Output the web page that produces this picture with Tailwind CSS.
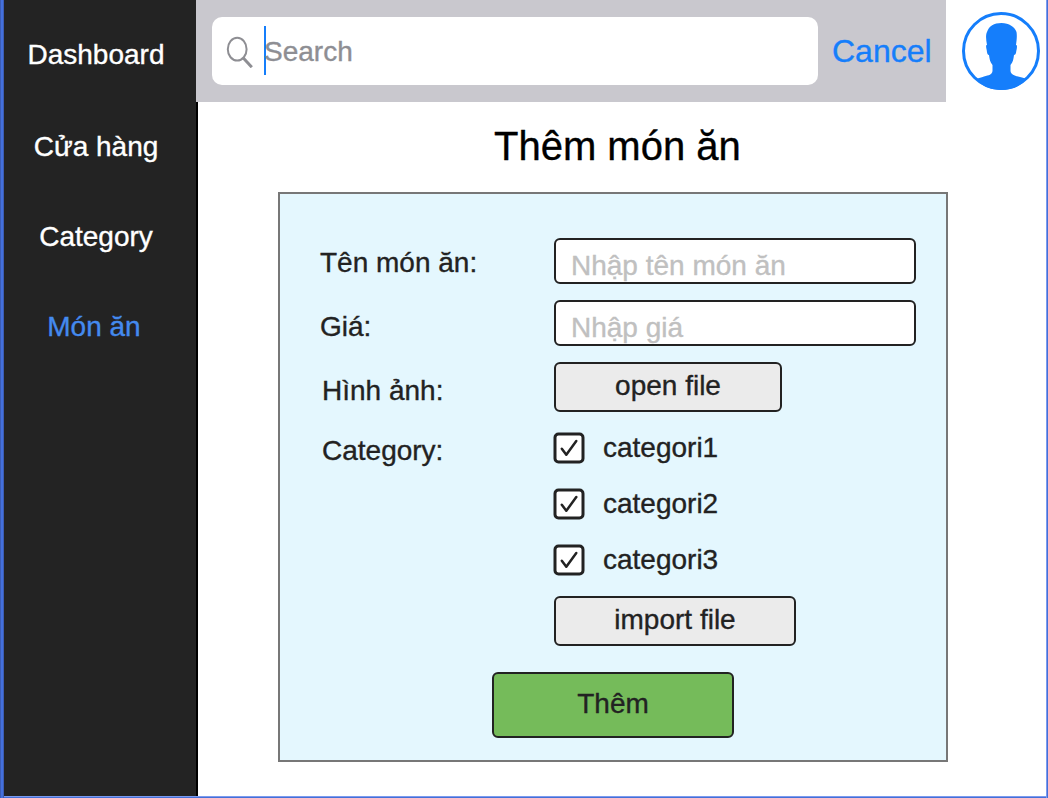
<!DOCTYPE html>
<html lang="vi">
<head>
<meta charset="utf-8">
<title>Thêm món ăn</title>
<script src="https://cdn.jsdelivr.net/npm/@tailwindcss/browser@4"></script>
</head>
<body class="bg-white overflow-hidden">
<div class="flex w-[1048px] h-[798px] font-['Liberation_Sans',Arial,sans-serif] text-[28px] leading-8 text-[#222222] [-webkit-text-stroke:0.35px]">
  <div class="w-1 shrink-0 bg-[#4470dc] border-x border-[#3c5cb4]"></div>
  <div class="flex flex-1 border-r border-[#4470d8]">
  <div class="flex flex-1 flex-col border-r border-[#7c9bee]">
    <div class="flex h-[796px]">
      <nav class="flex w-48 shrink-0 flex-col items-center bg-[#232323] pt-[39px] pr-2 text-white">
        <a>Dashboard</a>
        <a class="mt-[60px]">Cửa hàng</a>
        <a class="mt-[58px]">Category</a>
        <a class="mt-[58px] mr-1 text-[#448aef]">Món ăn</a>
      </nav>
      <div class="flex flex-1 flex-col">
        <header class="flex h-[102px] shrink-0">
          <div class="flex w-[750px] items-start bg-[#c9c8ce] pl-4 pt-[17px]">
            <div class="flex h-[68px] w-[606px] items-start rounded-[10px] bg-white">
              <svg class="ml-[14px] mt-[19px] h-8 w-7 shrink-0" viewBox="0 0 28 32" fill="none" stroke="#8e8e93"><ellipse cx="11.200" cy="13.200" rx="9.400" ry="11.400" stroke-width="2"/><path d="M17.300 22L25.800 31.200" stroke-width="3"/></svg>
              <div class="ml-[10px] mt-[9px] h-[49px] w-[2px] bg-[#157efb]"></div>
              <span class="-ml-[2px] mt-[19px] text-[#8e8e93]">Search</span>
            </div>
            <span class="ml-[14px] mt-4 text-[32px] leading-9 text-[#157efb]">Cancel</span>
          </div>
          <svg class="ml-4 mt-3 h-[78px] w-[78px]" viewBox="0 0 78 78"><circle cx="39" cy="39" r="37.5" fill="white" stroke="#157efb" stroke-width="3"/><path fill="#157efb" d="M39.500 11C47 11 53 15 54.500 20C55.200 24 54.600 29 54 33C55.500 33 55 36 54.300 39C54 42 53 43 52 43C51.500 47 51 50 48.500 53L48.500 59C49 63 54 64 58 65C61 66 62.500 66 64.500 67C58 75 49 78 39 78C29 78 20 74.500 14.500 67C17 66 19 65.500 22 64.500C27 63 30 63 30.500 59L30.500 53C28 50 27.500 47 27 43C25.500 43 25 41 24.700 38C24 35 23.700 33 25 33C24 28 23.500 23 25 20C27 14 32 11 39.500 11Z"/></svg>
        </header>
        <main class="flex flex-1 flex-col border-l-2 border-black">
          <h1 class="ml-[296px] mt-[22px] text-[40px] leading-[44px] text-black">Thêm món ăn</h1>
          <form class="ml-20 mt-6 flex h-[570px] w-[670px] flex-col border-2 border-[#777777] bg-[#e4f7fe]">
            <div class="flex pt-11">
              <div class="flex w-[274px] flex-col pl-10 pt-[9px]">
                <label>Tên món ăn:</label>
                <label class="mt-8">Giá:</label>
                <label class="mt-8 pl-0.5">Hình ảnh:</label>
                <label class="mt-7 pl-0.5">Category:</label>
              </div>
              <div class="flex flex-col">
                <div class="h-[46px] w-[362px] rounded-md border-2 border-[#222222] bg-white pl-[15px] pt-[10px] text-[#c0c0c0]">Nhập tên món ăn</div>
                <div class="mt-4 h-[46px] w-[362px] rounded-md border-2 border-[#222222] bg-white pl-[15px] pt-[10px] text-[#c0c0c0]">Nhập giá</div>
                <button type="button" class="mt-4 flex h-[50px] w-[228px] justify-center rounded-md border-2 border-[#222222] bg-[#ebebeb] pt-[6px]">open file</button>
                <div class="mt-5 flex flex-col gap-6">
                  <label class="flex h-8"><svg class="-ml-px mr-[18px] h-8 w-8" viewBox="0 0 32 32"><rect x="2" y="2" width="28" height="28" rx="3.500" fill="white" stroke="#222222" stroke-width="3"/><path d="M8.800 16.700L13.300 22.800L23.300 9" fill="none" stroke="#222222" stroke-width="2.500" stroke-linecap="round" stroke-linejoin="round"/></svg>categori1</label>
                  <label class="flex h-8"><svg class="-ml-px mr-[18px] h-8 w-8" viewBox="0 0 32 32"><rect x="2" y="2" width="28" height="28" rx="3.500" fill="white" stroke="#222222" stroke-width="3"/><path d="M8.800 16.700L13.300 22.800L23.300 9" fill="none" stroke="#222222" stroke-width="2.500" stroke-linecap="round" stroke-linejoin="round"/></svg>categori2</label>
                  <label class="flex h-8"><svg class="-ml-px mr-[18px] h-8 w-8" viewBox="0 0 32 32"><rect x="2" y="2" width="28" height="28" rx="3.500" fill="white" stroke="#222222" stroke-width="3"/><path d="M8.800 16.700L13.300 22.800L23.300 9" fill="none" stroke="#222222" stroke-width="2.500" stroke-linecap="round" stroke-linejoin="round"/></svg>categori3</label>
                </div>
                <button type="button" class="mt-5 flex h-[50px] w-[242px] justify-center rounded-md border-2 border-[#222222] bg-[#ebebeb] pt-[6px]">import file</button>
              </div>
            </div>
            <button type="button" class="mt-[26px] flex h-[66px] w-[242px] justify-center self-center rounded-md border-2 border-[#222222] bg-[#75bb5a] pt-[14px]">Thêm</button>
          </form>
        </main>
      </div>
    </div>
    <div class="h-[2px] border-t border-[#7c9bee] bg-[#4470d8]"></div>
  </div>
  </div>
</div>
</body>
</html>
